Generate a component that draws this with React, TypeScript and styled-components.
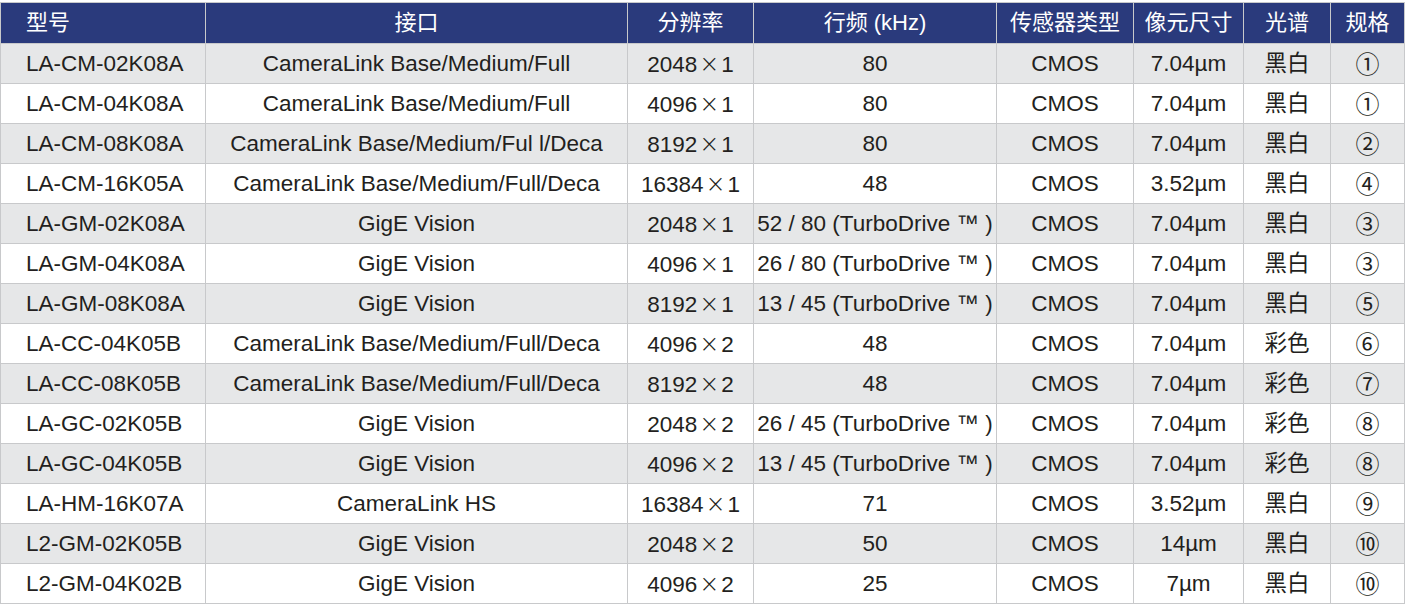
import * as React from 'react';
import styled, { createGlobalStyle } from 'styled-components';

const GlobalStyle = createGlobalStyle`
  html, body {
    margin: 0;
    padding: 0;
    background: #ffffff;
  }
`;

const Page = styled.div`
  padding-top: 2px;
  width: 1405px;
  font-family: 'Liberation Sans', Arial, 'Noto Sans CJK SC', sans-serif;
  color: #231f20;
`;

const Table = styled.table`
  border-collapse: collapse;
  table-layout: fixed;
  width: 1404px;
  border: 1px solid #c8c9cb;
  font-size: 22.5px;
  line-height: 1;
`;

const HeadCell = styled.th<{ $left?: boolean }>`
  background: #2a3a7c;
  color: #ffffff;
  font-weight: normal;
  font-size: 22px;
  height: 40px;
  padding: 0 ${props => (props.$left ? '25px' : '0')};
  text-align: ${props => (props.$left ? 'left' : 'center')};
  border-left: 1px solid #c8c9cb;
  border-bottom: 1px solid #c8c9cb;
  white-space: nowrap;
`;

const Row = styled.tr<{ $shaded: boolean }>`
  background: ${props => (props.$shaded ? '#e6e7e8' : '#ffffff')};
`;

const Cell = styled.td<{ $left?: boolean }>`
  height: 38px;
  padding: 1px ${props => (props.$left ? '25px' : '0')} 0;
  text-align: ${props => (props.$left ? 'left' : 'center')};
  border: 1px solid #c8c9cb;
  white-space: nowrap;
`;

const Times = styled.span`
  display: inline-block;
  width: 24px;
  text-align: center;
  font-family: 'DejaVu Sans', sans-serif;
  font-weight: 300;
  font-size: 24px;
  line-height: 1;
`;

const Circled = styled.span`
  font-family: 'Noto Sans CJK SC', 'DejaVu Sans', sans-serif;
  font-size: 24px;
  line-height: 1;
`;

const widths = [205, 422, 126, 243, 137, 110, 87, 74];
const headers = ['型号', '接口', '分辨率', '行频 (kHz)', '传感器类型', '像元尺寸', '光谱', '规格'];

type Spec = [string, string, string, string, string, string, string, string];

const rows: Spec[] = [
  ['LA-CM-02K08A', 'CameraLink Base/Medium/Full', '2048×1', '80', 'CMOS', '7.04µm', '黑白', '①'],
  ['LA-CM-04K08A', 'CameraLink Base/Medium/Full', '4096×1', '80', 'CMOS', '7.04µm', '黑白', '①'],
  ['LA-CM-08K08A', 'CameraLink Base/Medium/Ful l/Deca', '8192×1', '80', 'CMOS', '7.04µm', '黑白', '②'],
  ['LA-CM-16K05A', 'CameraLink Base/Medium/Full/Deca', '16384×1', '48', 'CMOS', '3.52µm', '黑白', '④'],
  ['LA-GM-02K08A', 'GigE Vision', '2048×1', '52 / 80 (TurboDrive ™ )', 'CMOS', '7.04µm', '黑白', '③'],
  ['LA-GM-04K08A', 'GigE Vision', '4096×1', '26 / 80 (TurboDrive ™ )', 'CMOS', '7.04µm', '黑白', '③'],
  ['LA-GM-08K08A', 'GigE Vision', '8192×1', '13 / 45 (TurboDrive ™ )', 'CMOS', '7.04µm', '黑白', '⑤'],
  ['LA-CC-04K05B', 'CameraLink Base/Medium/Full/Deca', '4096×2', '48', 'CMOS', '7.04µm', '彩色', '⑥'],
  ['LA-CC-08K05B', 'CameraLink Base/Medium/Full/Deca', '8192×2', '48', 'CMOS', '7.04µm', '彩色', '⑦'],
  ['LA-GC-02K05B', 'GigE Vision', '2048×2', '26 / 45 (TurboDrive ™ )', 'CMOS', '7.04µm', '彩色', '⑧'],
  ['LA-GC-04K05B', 'GigE Vision', '4096×2', '13 / 45 (TurboDrive ™ )', 'CMOS', '7.04µm', '彩色', '⑧'],
  ['LA-HM-16K07A', 'CameraLink HS', '16384×1', '71', 'CMOS', '3.52µm', '黑白', '⑨'],
  ['L2-GM-02K05B', 'GigE Vision', '2048×2', '50', 'CMOS', '14µm', '黑白', '⑩'],
  ['L2-GM-04K02B', 'GigE Vision', '4096×2', '25', 'CMOS', '7µm', '黑白', '⑩'],
];

function Resolution({ value }: { value: string }) {
  const [a, b] = value.split('×');
  return (
    <>
      {a}
      <Times>×</Times>
      {b}
    </>
  );
}

export default function App() {
  return (
    <Page>
      <GlobalStyle />
      <Table>
        <colgroup>
          {widths.map((w, i) => (
            <col key={i} style={{ width: w }} />
          ))}
        </colgroup>
        <thead>
          <tr>
            {headers.map((h, i) => (
              <HeadCell key={h} $left={i === 0}>
                {h}
              </HeadCell>
            ))}
          </tr>
        </thead>
        <tbody>
          {rows.map((r, i) => (
            <Row key={r[0]} $shaded={i % 2 === 0}>
              <Cell $left>{r[0]}</Cell>
              <Cell>{r[1]}</Cell>
              <Cell>
                <Resolution value={r[2]} />
              </Cell>
              <Cell>{r[3]}</Cell>
              <Cell>{r[4]}</Cell>
              <Cell>{r[5]}</Cell>
              <Cell>{r[6]}</Cell>
              <Cell>
                <Circled>{r[7]}</Circled>
              </Cell>
            </Row>
          ))}
        </tbody>
      </Table>
    </Page>
  );
}
